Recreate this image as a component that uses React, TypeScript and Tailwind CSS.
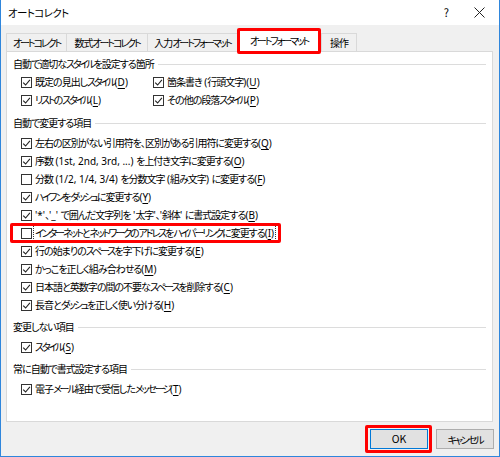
import React from 'react';

type RowProps = {
  text: string;
  k: string;
  checked?: boolean;
  focus?: boolean;
  highlight?: boolean;
};

const Txt = ({ s }: { s: string }) => {
  const parts = s.match(/[\x20-\x7e]+|[\u30a0-\u30ff]+|[^\x20-\x7e\u30a0-\u30ff]+/g) || [];
  return (
    <>
      {parts.map((p, i) =>
        /^[\x20-\x7e]/.test(p) ? (
          <span key={i} className="tracking-[0px] [font-family:'Noto_Sans',sans-serif] whitespace-pre">
            {p}
          </span>
        ) : /^[\u30a0-\u30ff]/.test(p) ? (
          <span key={i} className="tracking-[-2.1px]">
            {p}
          </span>
        ) : (
          <span key={i}>{p}</span>
        ),
      )}
    </>
  );
};

const Box = ({ checked }: { checked?: boolean }) => (
  <span className="flex h-[11px] w-[11px] shrink-0 items-center justify-center border border-[#333] bg-white">
    {checked && (
      <svg width="9" height="9" viewBox="0 0 9 9">
        <path d="M1.2 4.6 L3.6 7 L7.9 1.8" fill="none" stroke="#222" strokeWidth="1.1" />
      </svg>
    )}
  </span>
);

const Label = ({ text, k }: { text: string; k: string }) => (
  <>
    <Txt s={text} />
    <span className="tracking-[0px] [font-family:'Noto_Sans',sans-serif]">
      (<span className="underline underline-offset-2">{k}</span>)
    </span>
  </>
);

const Row = ({ text, k, checked, focus, highlight }: RowProps) => (
  <div className="relative flex h-[18px] items-center whitespace-nowrap pl-[14px]">
    <Box checked={checked} />
    <span
      className={
        focus
          ? 'ml-[1px] border border-dotted border-[#333] px-[1px] leading-[14px]'
          : 'ml-[3px] leading-[14px]'
      }
    >
      <Label text={text} k={k} />
    </span>
    {highlight && (
      <div className="absolute left-[3px] top-[-1px] h-[20px] w-[271px] rounded-[2px] border-[3px] border-[#f00]" />
    )}
  </div>
);

const Group = ({ title }: { title: string }) => (
  <div className="flex h-[18px] items-center whitespace-nowrap pl-[6px] pr-[6px]">
    <span className="leading-[14px]">
      <Txt s={title} />
    </span>
    <div className="ml-[4px] h-px flex-1 bg-[#dcdcdc]" />
  </div>
);

const changeRows: RowProps[] = [
  { text: '左右の区別がない引用符を、区別がある引用符に変更する', k: 'Q', checked: true },
  { text: '序数 (1st, 2nd, 3rd, ...) を上付き文字に変更する', k: 'O', checked: true },
  { text: '分数 (1/2, 1/4, 3/4) を分数文字 (組み文字) に変更する', k: 'F' },
  { text: 'ハイフンをダッシュに変更する', k: 'Y', checked: true },
  { text: "'*'、'_' で囲んだ文字列を '太字'、'斜体' に書式設定する", k: 'B', checked: true },
  { text: 'インターネットとネットワークのアドレスをハイパーリンクに変更する', k: 'I', focus: true, highlight: true },
  { text: '行の始まりのスペースを字下げに変更する', k: 'E', checked: true },
  { text: 'かっこを正しく組み合わせる', k: 'M', checked: true },
  { text: '日本語と英数字の間の不要なスペースを削除する', k: 'C', checked: true },
  { text: '長音とダッシュを正しく使い分ける', k: 'H', checked: true },
];

const tabs = ['オートコレクト', '数式オートコレクト', '入力オートフォーマット', 'オートフォーマット', '操作'];
const tabWidths = ['w-[60px]', 'w-[81px]', 'w-[90px]', 'w-[84px]', 'w-[36px]'];

export default function App() {
  return (
    <div className="flex h-[457px] w-[500px] flex-col overflow-hidden border-x border-b border-[#2f86dc] bg-[#f0f0f0] text-[10px] tracking-[-1px] text-black [font-family:'Noto_Sans_CJK_JP','Noto_Sans',sans-serif] [font-feature-settings:'palt']">
      {/* title bar */}
      <div className="flex h-[25px] shrink-0 items-center bg-white pl-[7px] pr-[14px]">
        <span className="text-[10.5px] tracking-[-0.6px]">オートコレクト</span>
        <span className="ml-auto mr-[26px] text-[11px]">?</span>
        <svg width="11" height="11" viewBox="0 0 11 11">
          <path d="M0.5 0.5 L10.5 10.5 M10.5 0.5 L0.5 10.5" stroke="#222" strokeWidth="1" />
        </svg>
      </div>

      {/* tabs */}
      <div className="relative z-10 mt-[4px] flex h-[22px] items-end whitespace-nowrap pl-[5px]">
        {tabs.map((t, i) =>
          i === 3 ? (
            <div
              key={t}
              className={`relative -mb-px flex h-[23px] ${tabWidths[i]} items-center justify-center border-x border-t border-[#d9d9d9] bg-white pb-[1px]`}
            >
              <Txt s={t} />
              <div className="absolute left-[-1px] top-[-2px] h-[26px] w-[84px] rounded-[2px] border-[3px] border-[#f00]" />
            </div>
          ) : (
            <div
              key={t}
              className={`flex h-[18px] ${tabWidths[i]} items-center justify-center border-t border-l border-[#d9d9d9] ${i === 4 ? 'border-r' : ''} bg-[#f0f0f0]`}
            >
              <Txt s={t} />
            </div>
          ),
        )}
      </div>

      {/* panel */}
      <div className="ml-[5px] flex h-[371px] w-[487px] flex-col border border-[#d9d9d9] bg-white pt-[3px]">
        <Group title="自動で適切なスタイルを設定する箇所" />
        <div className="flex">
          <div className="w-[132px]">
            <Row text="既定の見出しスタイル" k="D" checked />
          </div>
          <Row text="箇条書き (行頭文字)" k="U" checked />
        </div>
        <div className="flex">
          <div className="w-[132px]">
            <Row text="リストのスタイル" k="L" checked />
          </div>
          <Row text="その他の段落スタイル" k="P" checked />
        </div>

        <div className="mt-[5px]">
          <Group title="自動で変更する項目" />
        </div>
        <div className="mt-[2px]">
          {changeRows.map((r) => (
            <Row key={r.text} {...r} />
          ))}
        </div>

        <div className="mt-[4px]">
          <Group title="変更しない項目" />
        </div>
        <div className="mt-[2px]">
          <Row text="スタイル" k="S" checked />
        </div>

        <div className="mt-[4px]">
          <Group title="常に自動で書式設定する項目" />
        </div>
        <div className="mt-[2px]">
          <Row text="電子メール経由で受信したメッセージ" k="T" checked />
        </div>
      </div>

      {/* footer */}
      <div className="flex flex-1 items-start justify-end gap-[8px] pr-[5px] pt-[7px]">
        <div className="relative">
          <button className="flex h-[20px] w-[58px] items-center justify-center border border-[#0078d7] bg-[#e1e1e1] text-[10.5px] tracking-[0px]">
            OK
          </button>
          <div className="absolute bottom-[-4px] left-[-5px] right-[-4px] top-[-4px] rounded-[2px] border-[3px] border-[#f00]" />
        </div>
        <button className="flex h-[20px] w-[58px] items-center justify-center border border-[#adadad] bg-[#e1e1e1] text-[10px]">
          <Txt s="キャンセル" />
        </button>
      </div>
    </div>
  );
}
